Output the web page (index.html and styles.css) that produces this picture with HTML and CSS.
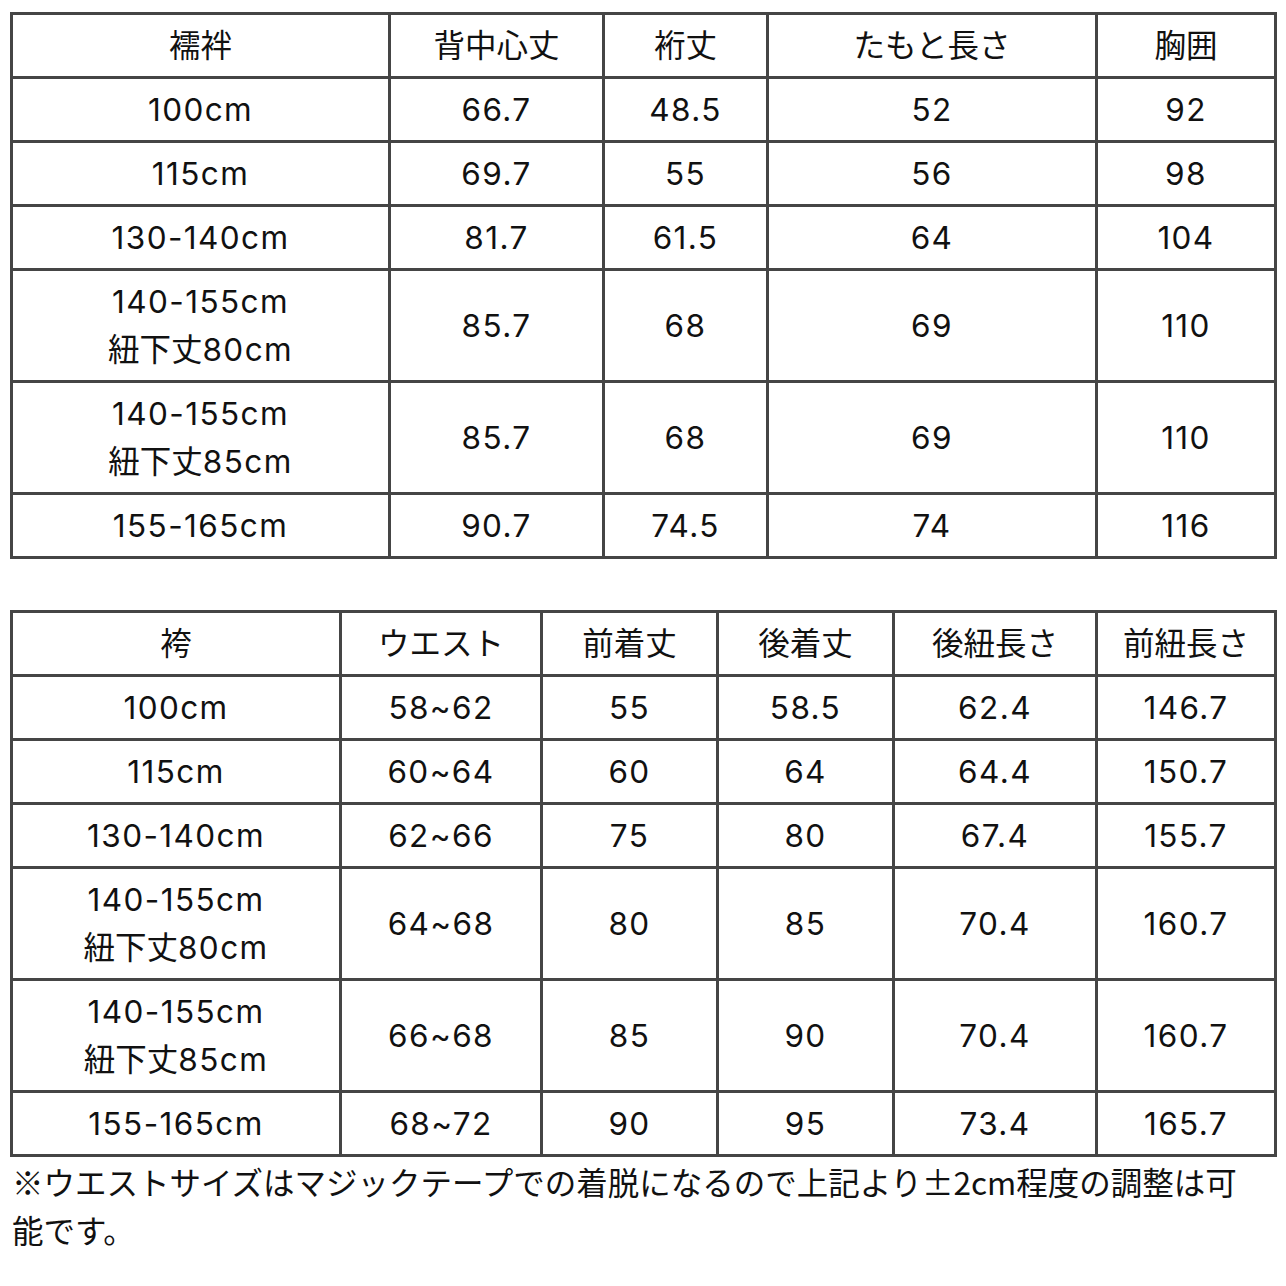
FILE: index.html
```html
<!DOCTYPE html>
<html lang="ja">
<head>
<meta charset="utf-8">
<title>サイズ表</title>
<link rel="stylesheet" href="styles.css">
</head>
<body>
<div class="page">
  <table class="size-table t1">
    <colgroup>
      <col class="c1-1"><col class="c1-2"><col class="c1-3"><col class="c1-4"><col class="c1-5">
    </colgroup>
    <tr class="head"><td>襦袢</td><td>背中心丈</td><td>裄丈</td><td>たもと長さ</td><td>胸囲</td></tr>
    <tr><td>100cm</td><td>66.7</td><td>48.5</td><td>52</td><td>92</td></tr>
    <tr><td>115cm</td><td>69.7</td><td>55</td><td>56</td><td>98</td></tr>
    <tr><td>130-140cm</td><td>81.7</td><td>61.5</td><td>64</td><td>104</td></tr>
    <tr><td>140-155cm<br><span class="jp">紐下丈</span>80cm</td><td>85.7</td><td>68</td><td>69</td><td>110</td></tr>
    <tr><td>140-155cm<br><span class="jp">紐下丈</span>85cm</td><td>85.7</td><td>68</td><td>69</td><td>110</td></tr>
    <tr><td>155-165cm</td><td>90.7</td><td>74.5</td><td>74</td><td>116</td></tr>
  </table>

  <table class="size-table t2">
    <colgroup>
      <col class="c2-1"><col class="c2-2"><col class="c2-3"><col class="c2-4"><col class="c2-5"><col class="c2-6">
    </colgroup>
    <tr class="head"><td>袴</td><td>ウエスト</td><td>前着丈</td><td>後着丈</td><td>後紐長さ</td><td>前紐長さ</td></tr>
    <tr><td>100cm</td><td>58~62</td><td>55</td><td>58.5</td><td>62.4</td><td>146.7</td></tr>
    <tr><td>115cm</td><td>60~64</td><td>60</td><td>64</td><td>64.4</td><td>150.7</td></tr>
    <tr><td>130-140cm</td><td>62~66</td><td>75</td><td>80</td><td>67.4</td><td>155.7</td></tr>
    <tr><td>140-155cm<br><span class="jp">紐下丈</span>80cm</td><td>64~68</td><td>80</td><td>85</td><td>70.4</td><td>160.7</td></tr>
    <tr><td>140-155cm<br><span class="jp">紐下丈</span>85cm</td><td>66~68</td><td>85</td><td>90</td><td>70.4</td><td>160.7</td></tr>
    <tr><td>155-165cm</td><td>68~72</td><td>90</td><td>95</td><td>73.4</td><td>165.7</td></tr>
  </table>

  <p class="note">※ウエストサイズはマジックテープでの着脱になるので上記より±2cm程度の調整は可能です。</p>
</div>
</body>
</html>
```

FILE: styles.css
```css
html, body {
  margin: 0;
  padding: 0;
  background: #ffffff;
}

body {
  font-family: Inter, "Noto Sans CJK JP", "Noto Sans", sans-serif;
  color: #111111;
  font-size: 31.5px;
  line-height: 48px;
}

.page {
  padding: 12px 12px 0 10px;
  width: 1264px;
}

.size-table {
  border-collapse: collapse;
  table-layout: fixed;
  width: 1264px;
}

.size-table td {
  border: 3px solid #454545;
  padding: 6.5px 2px;
  text-align: center;
  vertical-align: middle;
  white-space: nowrap;
  letter-spacing: 1.4px;
}

.size-table .head td,
.size-table .jp {
  letter-spacing: 0;
}

.t2 {
  margin-top: 51px;
}

.c1-1 { width: 378px; }
.c1-2 { width: 214px; }
.c1-3 { width: 164px; }
.c1-4 { width: 329px; }
.c1-5 { width: 179px; }

.c2-1 { width: 329px; }
.c2-2 { width: 201px; }
.c2-3 { width: 176px; }
.c2-4 { width: 176px; }
.c2-5 { width: 203px; }
.c2-6 { width: 179px; }

.note {
  margin: 0;
  padding-left: 2px;
  width: 1245px;
  font-family: "Noto Sans CJK JP", "Noto Sans", sans-serif;
}
```
